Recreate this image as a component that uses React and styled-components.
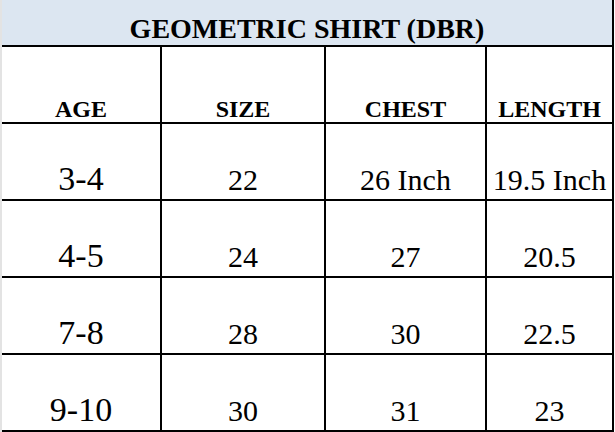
import React from 'react';
import styled, {createGlobalStyle} from 'styled-components';

const GlobalStyle = createGlobalStyle`
  html, body {
    margin: 0;
    padding: 0;
    background: #ffffff;
  }
  body {
    font-family: "Liberation Serif", "Times New Roman", serif;
    color: #000000;
  }
`;

const rows = [
  ['3-4', '22', '26 Inch', '19.5 Inch'],
  ['4-5', '24', '27', '20.5'],
  ['7-8', '28', '30', '22.5'],
  ['9-10', '30', '31', '23'],
];

const Sheet = () => {
  return (
    <Grid>
      <Title>GEOMETRIC SHIRT (DBR)</Title>
      <HeadCell>AGE</HeadCell>
      <HeadCell>SIZE</HeadCell>
      <HeadCell>CHEST</HeadCell>
      <HeadCell>LENGTH</HeadCell>
      {rows.map((row, r) =>
        row.map((value, c) => (
          <Cell key={r + '-' + c} $big={c === 0}>{value}</Cell>
        ))
      )}
    </Grid>
  );
};

const App = () => (
  <>
    <GlobalStyle/>
    <Sheet/>
  </>
);

const Grid = styled.div`
  display: grid;
  grid-template-columns: 160px 164px 161px 127px;
  grid-template-rows: 47px 77px repeat(4, 77px);
  width: 612px;
  border-left: 2px solid #e3e3e3;
  font-family: "Liberation Serif", "Times New Roman", serif;
`;

const Box = styled.div`
  box-sizing: border-box;
  display: flex;
  flex-direction: column;
  justify-content: flex-end;
  align-items: center;
  border-right: 2px solid #000;
  border-bottom: 2px solid #000;
  line-height: 1;
  white-space: nowrap;
`;

const Title = styled(Box)`
  grid-column: 1 / span 4;
  background: #dce6f1;
  font-weight: bold;
  font-size: 28px;
  padding-bottom: 2px;
`;

const HeadCell = styled(Box)`
  font-weight: bold;
  font-size: 24px;
  padding-bottom: 1px;
`;

const Cell = styled(Box)`
  font-size: ${p => (p.$big ? '34px' : '30px')};
  padding-bottom: ${p => (p.$big ? '3px' : '4px')};
`;

export default App;
